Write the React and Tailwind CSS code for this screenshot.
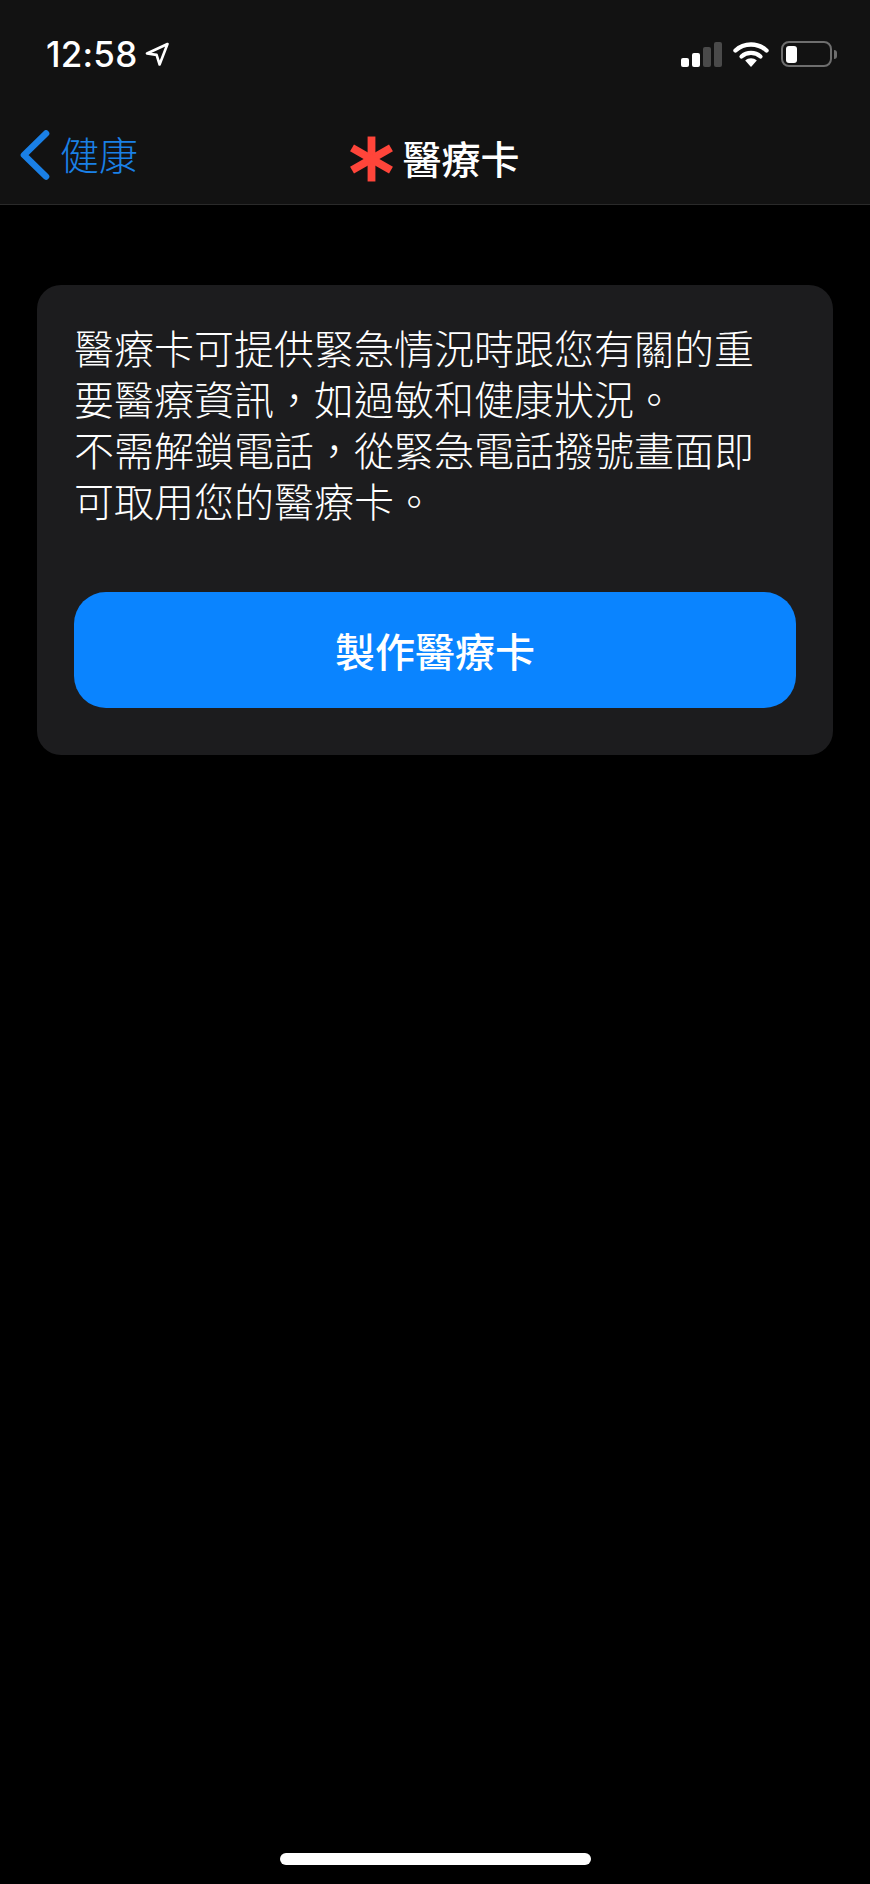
const cjk = "font-['Noto_Sans_CJK_TC','Noto_Sans',sans-serif]";

function SignalBars() {
  return (
    <div className="flex items-end gap-[3px]">
      <div className="h-[9px] w-[8px] rounded-[2px] bg-white" />
      <div className="h-[14px] w-[8px] rounded-[2px] bg-white" />
      <div className="h-[20px] w-[8px] rounded-[2px] bg-[#4a4a4a]" />
      <div className="h-[25px] w-[8px] rounded-[2px] bg-[#4a4a4a]" />
    </div>
  );
}

function Wifi() {
  return (
    <svg width="36" height="26" viewBox="0 0 36 26" fill="none">
      <path d="M2.5 9.5C11 1.5 25 1.5 33.5 9.5" stroke="white" strokeWidth="4.4" strokeLinecap="round" />
      <path d="M8.5 15.5C13.8 10.7 22.2 10.7 27.5 15.5" stroke="white" strokeWidth="4.2" strokeLinecap="round" />
      <path d="M12.2 19.6C15.6 16.6 20.4 16.6 23.8 19.6L18 26Z" fill="white" />
    </svg>
  );
}

function Battery() {
  return (
    <div className="flex items-center gap-[2px]">
      <div className="flex h-[26px] w-[51px] items-center rounded-[8px] border-[2px] border-[#6e6e6e] px-[3px]">
        <div className="h-[17px] w-[11px] rounded-[3px] bg-white" />
      </div>
      <div className="h-[9px] w-[3px] rounded-r-[3px] bg-[#6e6e6e]" />
    </div>
  );
}

function LocationArrow() {
  return (
    <svg width="24" height="24" viewBox="0 0 24 24" fill="none">
      <path d="M22.5 2 2 11.5l9.6 1.4L14.6 22.5Z" stroke="white" strokeWidth="2.6" strokeLinejoin="round" />
    </svg>
  );
}

function BackChevron() {
  return (
    <svg width="30" height="50" viewBox="0 0 30 50" fill="none">
      <path d="M26 3.5 4 25l22 21.5" stroke="#1a80e6" strokeWidth="6.6" strokeLinecap="round" strokeLinejoin="round" />
    </svg>
  );
}

function MedicalStar() {
  return (
    <svg width="43" height="46" viewBox="0 0 44 46" fill="#ff453a">
      <rect x="18" y="0" width="8" height="46" />
      <rect x="18" y="0" width="8" height="46" transform="rotate(60 22 23)" />
      <rect x="18" y="0" width="8" height="46" transform="rotate(-60 22 23)" />
    </svg>
  );
}

export default function App() {
  return (
    <div className={`flex h-[1884px] w-[870px] flex-col bg-black text-white ${cjk}`}>
      {/* status bar + nav */}
      <header className="h-[205px] border-b border-[#2a2a2a] bg-[#121212]">
        <div className="flex items-center justify-between pl-[46px] pr-[33px] pt-[40px]">
          <div className="flex items-center gap-[8px]">
            <span className="font-['Inter',sans-serif] text-[35px] font-medium leading-[28px] tracking-[0.2px]">12:58</span>
            <LocationArrow />
          </div>
          <div className="flex items-center gap-[11px]">
            <SignalBars />
            <Wifi />
            <div className="ml-[1px]">
              <Battery />
            </div>
          </div>
        </div>

        <nav className="mt-[60px] grid grid-cols-3 items-center">
          <div className="flex items-center gap-[10px] pl-[20px]">
            <BackChevron />
            <span className="-mt-[5px] text-[39px] font-light leading-[50px] text-[#1a80e6]">健康</span>
          </div>
          <div className="flex items-center justify-center gap-[9px] whitespace-nowrap">
            <div className="mt-[8px]">
              <MedicalStar />
            </div>
            <span className="mt-[3px] text-[39px] font-medium leading-[50px]">醫療卡</span>
          </div>
        </nav>
      </header>

      <main className="flex-1 px-[37px] pt-[80px]">
        <section className="rounded-[24px] bg-[#1c1c1e] px-[37px] pb-[47px] pt-[37px]">
          <p className="text-[40px] font-light leading-[51px] text-white">
            醫療卡可提供緊急情況時跟您有關的重
            <br />
            要醫療資訊，如過敏和健康狀況。
            <br />
            不需解鎖電話，從緊急電話撥號畫面即
            <br />
            可取用您的醫療卡。
          </p>
          <button className="mt-[66px] flex h-[116px] w-full items-center justify-center rounded-[32px] bg-[#0a84ff] text-[40px] font-medium text-white">
            製作醫療卡
          </button>
        </section>
      </main>

      <footer className="flex justify-center pb-[19px]">
        <div className="h-[12px] w-[311px] rounded-full bg-white" />
      </footer>
    </div>
  );
}
